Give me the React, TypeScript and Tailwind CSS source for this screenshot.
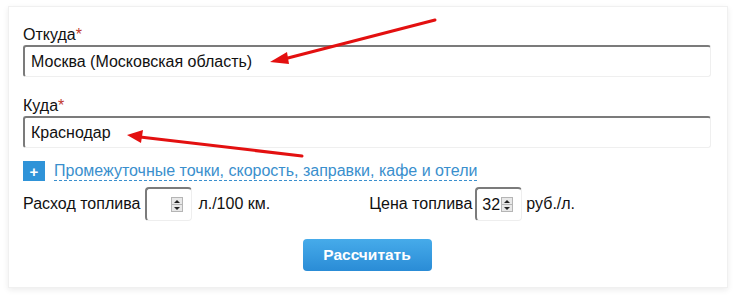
import { useState } from "react";

function Spinner() {
  return (
    <div className="flex flex-col w-[12px] h-[15px] border border-[#b5b5b5] bg-[#e8e8e8]">
      <div className="flex-1 flex items-center justify-center border-b border-[#b5b5b5]">
        <div className="w-0 h-0 border-l-[3px] border-r-[3px] border-b-[3px] border-l-transparent border-r-transparent border-b-[#222]" />
      </div>
      <div className="flex-1 flex items-center justify-center">
        <div className="w-0 h-0 border-l-[3px] border-r-[3px] border-t-[3px] border-l-transparent border-r-transparent border-t-[#222]" />
      </div>
    </div>
  );
}

function NumBox({ value }: { value: string }) {
  return (
    <div className="flex items-center w-[47px] h-[34px] rounded-[4px] border-t-2 border-l-2 border-r border-b border-t-[#7b7b7b] border-l-[#7b7b7b] border-r-[#eeeeee] border-b-[#eeeeee] pl-[5px] pr-[8px]">
      <span className="flex-1 text-[16px] text-[#111] leading-none">{value}</span>
      <Spinner />
    </div>
  );
}

function Field({ label, value }: { label: string; value: string }) {
  return (
    <div>
      <div className="text-[16px] leading-[18px] text-[#111]">
        {label}
        <span className="text-[#c0392b]">*</span>
      </div>
      <div className="mt-[1px] h-[32px] w-[688px] flex items-center pl-[6px] rounded-[3px] border-t-2 border-l-2 border-r border-b border-t-[#7b7b7b] border-l-[#7b7b7b] border-r-[#efefef] border-b-[#efefef] text-[16px] text-[#111]">
        {value}
      </div>
    </div>
  );
}

export default function App() {
  const [from] = useState("Москва (Московская область)");
  const [to] = useState("Краснодар");

  return (
    <div className="relative w-[739px] h-[298px] bg-white font-['Liberation_Sans',Arial,sans-serif]">
      <div className="ml-[8px] pt-[6px]">
        <div className="w-[720px] h-[282px] bg-white border border-[#f0f0f0] shadow-[0_2px_6px_rgba(0,0,0,0.08)] pl-[14px] pt-[19px]">
          <Field label="Откуда" value={from} />
          <div className="mt-[20px]">
            <Field label="Куда" value={to} />
          </div>
          <div className="mt-[13px] flex items-center h-[20px]">
            <div className="w-[22px] h-[20px] bg-[#2f93d8] text-white flex items-center justify-center text-[15px] font-bold leading-none">
              +
            </div>
            <span className="ml-[9px] text-[16px] text-[#3a8fcd] leading-[18px] border-b border-dashed border-[#3a8fcd]">
              Промежуточные точки, скорость, заправки, кафе и отели
            </span>
          </div>
          <div className="mt-[6px] flex items-center h-[34px] text-[16px] text-[#111]">
            <span>Расход топлива</span>
            <div className="ml-[5px]">
              <NumBox value="" />
            </div>
            <span className="ml-[6px]">л./100 км.</span>
            <span className="ml-[99px]">Цена топлива</span>
            <div className="ml-[3px]">
              <NumBox value="32" />
            </div>
            <span className="ml-[4px]">руб./л.</span>
          </div>
          <div className="mt-[18px] flex justify-center pr-[16px]">
            <button className="w-[129px] h-[32px] rounded-[4px] bg-gradient-to-b from-[#46abea] to-[#2a8cd6] text-white font-bold text-[15.5px]">
              Рассчитать
            </button>
          </div>
        </div>
      </div>
      <svg className="absolute left-0 top-0 pointer-events-none" width="739" height="298" viewBox="0 0 739 298">
        <line x1="435" y1="20" x2="284" y2="59" stroke="#e31010" strokeWidth="3" strokeLinecap="round" />
        <polygon points="270,62 287,52 289,64" fill="#e31010" />
        <line x1="302" y1="156" x2="140" y2="137" stroke="#e31010" strokeWidth="3" strokeLinecap="round" />
        <polygon points="127,135 143,130 141,143" fill="#e31010" />
      </svg>
    </div>
  );
}
